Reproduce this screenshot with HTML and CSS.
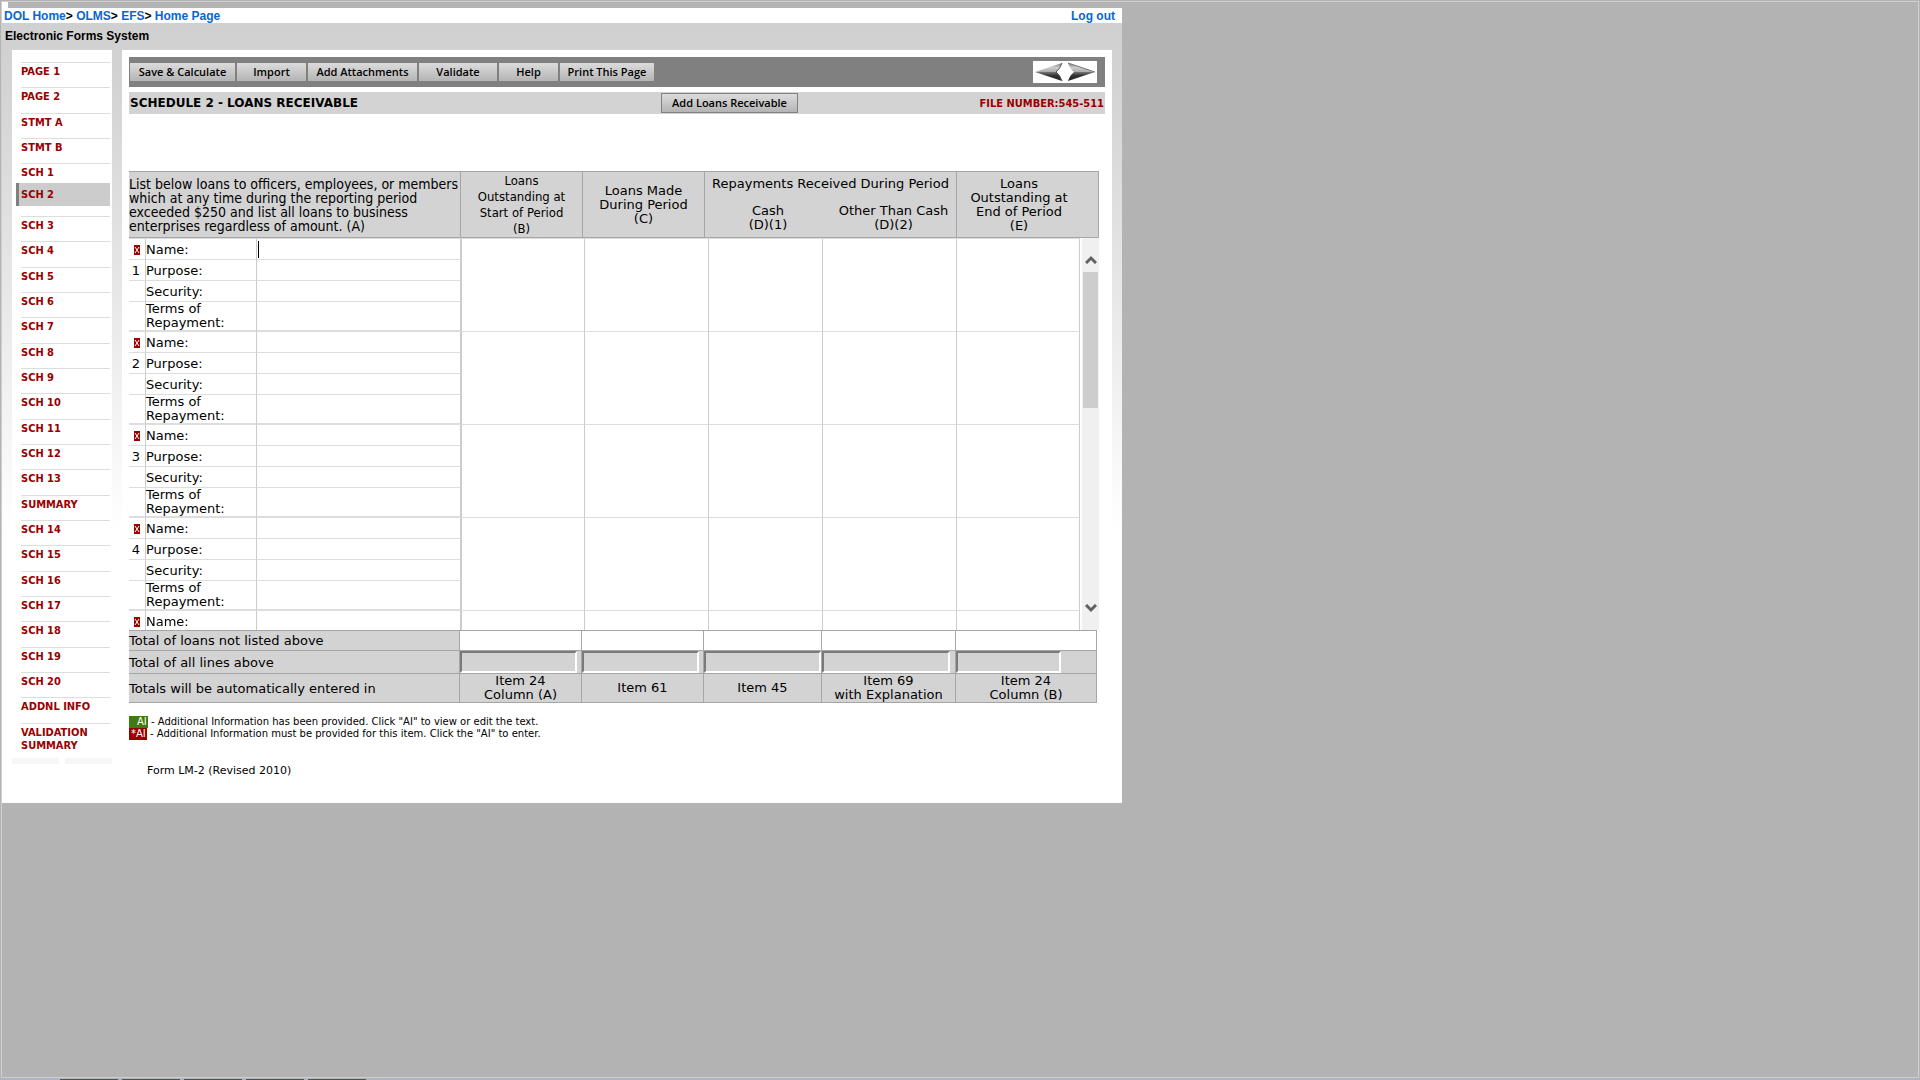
FILE: index.html
```html
<!DOCTYPE html>
<html lang="en">
<head>
    <meta charset="UTF-8">
    <meta name="viewport" content="width=device-width, initial-scale=1.0">
    <title>Electronic Forms System</title>
    <link rel="stylesheet" href="styles.css">
    <script src="script.js" defer></script>
</head>
<body>
<div class="frame">
    <div class="corner"></div>
    <div class="page">
        <!-- Breadcrumb -->
        <div class="topbar">
            <div><a href="#">DOL Home</a>&gt; <a href="#">OLMS</a>&gt; <a href="#">EFS</a>&gt; <a href="#">Home Page</a></div>
            <a href="#">Log out</a>
        </div>
        <div class="content">
            <div class="system">Electronic Forms System</div>
            <div class="columns">
                <nav class="sidebar">
                    <ul class="menu">
                        <li><a href="#">PAGE 1</a></li>
                        <li><a href="#">PAGE 2</a></li>
                        <li><a href="#">STMT A</a></li>
                        <li><a href="#">STMT B</a></li>
                        <li class="before"><a href="#">SCH 1</a></li>
                        <li class="current"><a href="#">SCH 2</a></li>
                        <li><a href="#">SCH 3</a></li>
                        <li><a href="#">SCH 4</a></li>
                        <li><a href="#">SCH 5</a></li>
                        <li><a href="#">SCH 6</a></li>
                        <li><a href="#">SCH 7</a></li>
                        <li><a href="#">SCH 8</a></li>
                        <li><a href="#">SCH 9</a></li>
                        <li><a href="#">SCH 10</a></li>
                        <li><a href="#">SCH 11</a></li>
                        <li><a href="#">SCH 12</a></li>
                        <li><a href="#">SCH 13</a></li>
                        <li><a href="#">SUMMARY</a></li>
                        <li><a href="#">SCH 14</a></li>
                        <li><a href="#">SCH 15</a></li>
                        <li><a href="#">SCH 16</a></li>
                        <li><a href="#">SCH 17</a></li>
                        <li><a href="#">SCH 18</a></li>
                        <li><a href="#">SCH 19</a></li>
                        <li><a href="#">SCH 20</a></li>
                        <li><a href="#">ADDNL INFO</a></li>
                        <li class="last"><a href="#">VALIDATION SUMMARY</a></li>
                    </ul>
                    <div class="menu-end"><span></span><span></span></div>
                </nav>
                <main class="main">
                    <div class="toolbar">
                        <button type="button" class="w-save">Save &amp; Calculate</button>
                        <button type="button" class="w-import">Import</button>
                        <button type="button" class="w-attach">Add Attachments</button>
                        <button type="button" class="w-validate">Validate</button>
                        <button type="button" class="w-help">Help</button>
                        <button type="button" class="w-print">Print This Page</button>
                        <div class="arrows">
                            <a href="#" aria-label="Previous">
                                <svg width="28" height="20" viewBox="0 0 28 20">
                                    <defs>
                                        <linearGradient id="light" x1="0" y1="0" x2="0" y2="1">
                                            <stop offset="0" stop-color="#777"/>
                                            <stop offset="0.5" stop-color="#ccc"/>
                                            <stop offset="1" stop-color="#aaa"/>
                                        </linearGradient>
                                        <linearGradient id="dark" x1="0" y1="0" x2="0" y2="1">
                                            <stop offset="0" stop-color="#777"/>
                                            <stop offset="0.4" stop-color="#333"/>
                                            <stop offset="1" stop-color="#222"/>
                                        </linearGradient>
                                    </defs>
                                    <path d="M0 10 L27 1 Q25 7 21 10 Z" fill="url(#light)"/>
                                    <path d="M0 10 L21 10 Q25 13 27 19 Z" fill="url(#dark)"/>
                                    <path d="M27 1 Q25 7 21 10 Q25 13 27 19" fill="none" stroke="#555"/>
                                </svg>
                            </a>
                            <a href="#" aria-label="Next">
                                <svg width="28" height="20" viewBox="0 0 28 20">
                                    <path d="M28 10 L1 1 Q3 7 7 10 Z" fill="url(#light)"/>
                                    <path d="M28 10 L7 10 Q3 13 1 19 Z" fill="url(#dark)"/>
                                    <path d="M1 1 L28 10" fill="none" stroke="#777"/>
                                </svg>
                            </a>
                        </div>
                    </div>
                    <div class="titlebar">
                        <h1>SCHEDULE 2 - LOANS RECEIVABLE</h1>
                        <button type="button">Add Loans Receivable</button>
                        <span class="file-number">FILE NUMBER:545-511</span>
                    </div>

                    <!-- Column headings -->
                    <table class="head">
                        <colgroup><col><col class="c122"><col class="c122"><col class="c126"><col class="c126"><col class="c142"></colgroup>
                        <tr>
                            <th rowspan="2" class="intro">List below loans to officers, employees, or members<br>which at any time during the reporting period<br>exceeded $250 and list all loans to business<br>enterprises regardless of amount. (A)</th>
                            <th rowspan="2" class="start">Loans<br>Outstanding at<br>Start of Period<br>(B)</th>
                            <th rowspan="2">Loans Made<br>During Period<br>(C)</th>
                            <th colspan="2" class="received">Repayments Received During Period</th>
                            <th rowspan="2" class="end">Loans<br>Outstanding at<br>End of Period<br>(E)</th>
                        </tr>
                        <tr>
                            <th class="cash">Cash<br>(D)(1)</th>
                            <th class="other">Other Than Cash<br>(D)(2)</th>
                        </tr>
                    </table>

                    <!-- Loan entries, rows are filled in by script.js -->
                    <div class="scroller">
                        <table class="loans">
                            <colgroup><col class="c17"><col class="c111"><col><col class="c123"><col class="c124"><col class="c114"><col class="c134"><col class="c123"></colgroup>
                            <tbody id="loanRows"></tbody>
                        </table>
                        <div class="scrollbar">
                            <svg class="up" width="12" height="9" viewBox="0 0 12 9"><path d="M1 8 L6 3 L11 8" fill="none" stroke="#606060" stroke-width="3"/></svg>
                            <div class="thumb"></div>
                            <svg class="down" width="12" height="9" viewBox="0 0 12 9"><path d="M1 1 L6 6 L11 1" fill="none" stroke="#606060" stroke-width="3"/></svg>
                        </div>
                    </div>

                    <!-- Totals -->
                    <table class="totals">
                        <colgroup><col><col class="c122"><col class="c122"><col class="c118"><col class="c134"><col class="c141"></colgroup>
                        <tr class="not-listed">
                            <th>Total of loans not listed above</th>
                            <td><input type="text" aria-label="Not listed (B)"></td>
                            <td><input type="text" aria-label="Not listed (C)"></td>
                            <td><input type="text" aria-label="Not listed (D)(1)"></td>
                            <td><input type="text" aria-label="Not listed (D)(2)"></td>
                            <td><input type="text" aria-label="Not listed (E)"></td>
                        </tr>
                        <tr class="all-lines">
                            <th>Total of all lines above</th>
                            <td><input type="text" readonly aria-label="Total (B)"></td>
                            <td><input type="text" readonly aria-label="Total (C)"></td>
                            <td><input type="text" readonly aria-label="Total (D)(1)"></td>
                            <td><input type="text" readonly class="w128" aria-label="Total (D)(2)"></td>
                            <td><input type="text" readonly class="w105" aria-label="Total (E)"></td>
                        </tr>
                        <tr class="entered">
                            <th>Totals will be automatically entered in</th>
                            <td>Item 24<br>Column (A)</td>
                            <td>Item 61</td>
                            <td>Item 45</td>
                            <td>Item 69<br>with Explanation</td>
                            <td>Item 24<br>Column (B)</td>
                        </tr>
                    </table>

                    <div class="legend">
                        <div><span class="ai green">AI</span> - Additional Information has been provided. Click "AI" to view or edit the text.</div>
                        <div><span class="ai red">*AI</span> - Additional Information must be provided for this item. Click the "AI" to enter.</div>
                    </div>
                    <p class="form-name">Form LM-2 (Revised 2010)</p>
                </main>
            </div>
        </div>
    </div>
</div>
<div class="taskbar"><span></span><span></span><span></span><span></span><span></span></div>
</body>
</html>
```
FILE: styles.css
```css
* {
    box-sizing: border-box;
}

body {
    margin: 0;
    padding: 1px 1px 0;
    min-height: 100vh;
    display: flex;
    flex-direction: column;
    background-color: #b3b3b3;
    color: #000;
    font-family: "DejaVu Sans", Verdana, sans-serif;
    font-size: 13px;
    line-height: 14px;
}

a {
    text-decoration: none;
}

button, input {
    font-family: inherit;
    font-size: inherit;
}

.frame {
    flex: 1;
    border: 1px solid #cfcfcf;
    margin-bottom: 1px;
}

.corner {
    width: 6px;
    height: 6px;
    background-color: #fff;
}

.page {
    max-width: 1120px;
    background-color: #fff;
}

/* Top bar */
.topbar {
    display: flex;
    justify-content: space-between;
    height: 15px;
    padding: 0 7px 0 2px;
    font: bold 12px/17px "Liberation Sans", Arial, sans-serif;
}

.topbar a {
    color: #0a66cc;
}

.content {
    background: linear-gradient(#d0d0d0, #d3d3d3 60px, #fff 510px);
    padding: 0 10px;
}

.system {
    height: 27px;
    margin-left: -7px;
    font: bold 12px/27px "Liberation Sans", Arial, sans-serif;
}

.columns {
    display: flex;
    align-items: flex-start;
    gap: 10px;
}

/* Left menu */
.sidebar {
    flex: none;
    width: 100px;
    background-color: #fff;
}

.menu {
    list-style: none;
    margin: 0;
    padding: 12px 2px 0 4px;
    font: bold 11px/13px "DejaVu Sans Condensed", Tahoma, sans-serif;
}

.menu li {
    height: 25px;
    margin-left: 5px;
    padding-top: 2px;
    border-top: 1px solid #ddd;
}

.menu li:nth-child(3n+2) {
    height: 26px;
}

.menu a {
    color: #990000;
}

.menu li.before {
    height: 20px;
}

.menu li.current {
    height: 23px;
    margin: 0 0 10px;
    padding: 5px 0 0 2px;
    border-top: none;
    border-left: 3px solid #808080;
    background-color: #ccc;
}

.menu li.last {
    height: 35px;
}

.menu-end {
    display: flex;
    gap: 6px;
}

.menu-end span {
    flex: 1;
    height: 6px;
    background-color: #f6f6f6;
}

/* Main part */
.main {
    flex: 1;
    min-width: 0;
    padding: 7px 7px 25px;
    background-color: #fff;
}

.toolbar {
    display: flex;
    align-items: flex-start;
    gap: 2px;
    height: 30px;
    padding: 6px 8px 0 1px;
    background-color: #808080;
}

.toolbar button, .titlebar button {
    height: 18px;
    padding: 0;
    border: none;
    background: linear-gradient(#dcdcdc, #b4b4b4);
    color: #000;
    font: 600 11px/16px "Open Sans", "Trebuchet MS", sans-serif;
    white-space: nowrap;
}

.w-save { width: 105px; }
.w-import { width: 69px; }
.w-attach { width: 109px; }
.w-validate { width: 78px; }
.w-help { width: 59px; }
.w-print { width: 94px; }

.arrows {
    display: flex;
    justify-content: space-between;
    align-items: center;
    width: 64px;
    height: 22px;
    margin: -2px 0 0 auto;
    padding: 0 2px;
    background-color: #fff;
}

.arrows svg {
    display: block;
}

.titlebar {
    display: flex;
    align-items: center;
    justify-content: space-between;
    height: 22px;
    margin-top: 5px;
    padding: 0 1px;
    background-color: #d3d3d3;
}

.titlebar h1 {
    flex: 1;
    margin: 0;
    font-size: 12px;
    line-height: 22px;
}

.titlebar button {
    width: 137px;
    height: 20px;
    border: 1px solid #808080;
}

.file-number {
    flex: 0 0 306px;
    padding-top: 1px;
    text-align: right;
    color: #990000;
    font: bold 11px/22px "DejaVu Sans Condensed", Tahoma, sans-serif;
}

/* Tables */
table {
    width: 100%;
    table-layout: fixed;
    border-collapse: separate;
    border-spacing: 0;
}

th, td {
    padding: 0;
    font-weight: normal;
}

.c17 { width: 17px; }
.c111 { width: 111px; }
.c114 { width: 114px; }
.c118 { width: 118px; }
.c122 { width: 122px; }
.c123 { width: 123px; }
.c124 { width: 124px; }
.c126 { width: 126px; }
.c134 { width: 134px; }
.c141 { width: 141px; }
.c142 { width: 142px; }

.head, .scroller {
    width: calc(100% - 6px);
}

.head {
    height: 67px;
    margin-top: 57px;
    background-color: #d3d3d3;
    border-top: 1px solid #a6a6a6;
    border-bottom: 1px solid #a6a6a6;
}

.head th {
    height: 65px;
    border-right: 1px solid #a6a6a6;
    text-align: center;
}

.head .intro {
    font: 14px/14px "DejaVu Sans Condensed", Tahoma, sans-serif;
    text-align: left;
    white-space: nowrap;
}

.head .start {
    font: 13px/16px "DejaVu Sans Condensed", Tahoma, sans-serif;
}

.head .received {
    height: 24px;
}

.head .cash, .head .other {
    height: 41px;
    padding-top: 3px;
}

.head .cash {
    border-right: none;
}

.head .end {
    padding-right: 17px;
}

.scroller {
    display: flex;
    align-items: flex-start;
    height: 392px;
    overflow: hidden;
}

.loans {
    flex: 1;
    border-top: 1px solid #ddd;
}

.loans th, .loans td {
    height: 21px;
    padding-top: 1px;
    border-right: 1px solid #ccc;
    border-bottom: 1px solid #ddd;
    text-align: left;
}

.loans th {
    white-space: nowrap;
}

.loans td.mark {
    padding-right: 5px;
    text-align: right;
}

.loans td.field {
    border-right-width: 2px;
}

.loans tr.terms > * {
    height: 30px;
    padding-top: 0;
    border-bottom-width: 2px;
}

.loans input {
    display: block;
    width: 100%;
    height: 17px;
    padding: 0 1px;
    border: none;
    outline: none;
    background: none;
}

.loans .active input {
    width: calc(100% - 1px);
    margin-left: 1px;
    border-left: 1px solid #000;
    caret-color: transparent;
}

.delete {
    display: block;
    width: 6px;
    height: 10px;
    margin-left: auto;
    padding: 0;
    border: none;
    background-color: #990000;
}

.delete svg {
    display: block;
}

.scrollbar {
    display: flex;
    flex-direction: column;
    align-items: center;
    align-self: stretch;
    width: 17px;
    margin-left: 2px;
    background-color: #f0f0f0;
}

.scrollbar .up {
    margin-top: 17px;
}

.scrollbar .thumb {
    width: 15px;
    height: 136px;
    margin-top: 8px;
    background-color: #cdcdcd;
}

.scrollbar .down {
    margin-top: auto;
    margin-bottom: 17px;
}

.totals {
    width: calc(100% - 8px);
    border-top: 1px solid #a6a6a6;
    background-color: #d3d3d3;
}

.totals th, .totals td {
    border-right: 1px solid #a6a6a6;
    border-bottom: 1px solid #a6a6a6;
    text-align: center;
}

.totals th {
    padding-top: 1px;
    text-align: left;
}

.totals input {
    display: block;
    width: 100%;
    height: 19px;
    padding: 0;
    border: none;
}

.not-listed > * {
    height: 20px;
}

.all-lines > * {
    height: 23px;
}

.totals .all-lines input {
    width: 117px;
    height: 22px;
    border: 2px solid;
    border-color: #7a7a7a #fff #fff #7a7a7a;
    background-color: #d3d3d3;
}

.totals .all-lines input.w128 {
    width: 128px;
}

.totals .all-lines input.w105 {
    width: 105px;
}

.entered > * {
    height: 29px;
}

/* Legend */
.legend {
    margin-top: 13px;
    font-size: 10px;
    line-height: 12px;
}

.ai {
    display: inline-block;
    height: 12px;
    padding-right: 1px;
    color: #fff;
}

.green {
    padding-left: 8px;
    background-color: #3f7a14;
}

.red {
    padding-left: 2px;
    background-color: #990000;
}

.form-name {
    margin: 24px 0 0 18px;
    font-size: 11px;
}

/* Strip at the bottom of the window */
.taskbar {
    display: flex;
    gap: 4px;
    height: 1px;
    margin: 0 -1px;
    padding-left: 60px;
    background-color: #a9b4cf;
}

.taskbar span {
    width: 58px;
    background-color: #4c5454;
}
```
FILE: script.js
```js
const loanRows = document.getElementById('loanRows');
const fields = ['Name:', 'Purpose:', 'Security:', 'Terms of<br>Repayment:'];
const deleteButton = '<button type="button" class="delete" aria-label="Delete">' +
    '<svg width="6" height="10" viewBox="0 0 6 10"><path d="M1 2 L5 8 M5 2 L1 8" stroke="#fff" stroke-width="1"/></svg></button>';

function addLoan(loan, labels) {
    labels.forEach((label, i) => {
        const row = document.createElement('tr');
        const id = `loan${loan}field${i}`;
        const mark = i === 0 ? deleteButton : (i === 1 ? loan : '');
        row.innerHTML = `<td class="mark">${mark}</td>` +
            `<th><label for="${id}">${label}</label></th>` +
            `<td class="field"><input type="text" id="${id}"></td>`;
        if (i === 0) {
            row.innerHTML += `<td rowspan="${labels.length}"></td>`.repeat(5);
        }
        if (i === 3) {
            row.className = 'terms';
        }
        loanRows.appendChild(row);
    });
}

for (let loan = 1; loan <= 4; loan++) {
    addLoan(loan, fields);
}
addLoan(5, fields.slice(0, 1));

// Start typing in the first name
const firstName = document.getElementById('loan1field0');
firstName.parentElement.classList.add('active');
firstName.focus();
```
